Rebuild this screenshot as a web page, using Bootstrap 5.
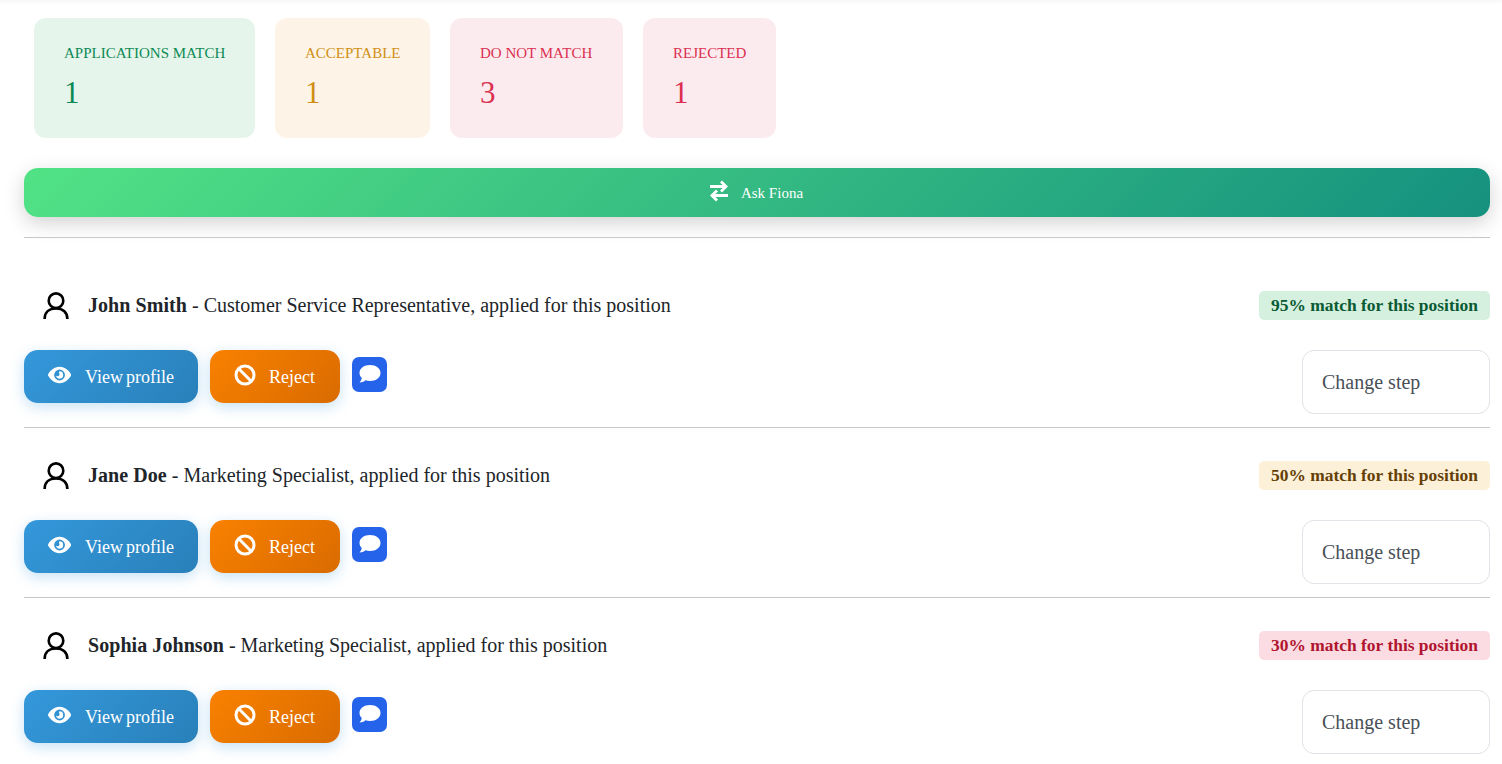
<!DOCTYPE html>
<html lang="en">
<head>
<meta charset="utf-8">
<title>Applications</title>
<link href="https://cdn.jsdelivr.net/npm/bootstrap@5.3.0/dist/css/bootstrap.min.css" rel="stylesheet">
<style>
html,body{height:764px;overflow:hidden}
body{font-family:"Liberation Serif",serif;background:#fff;color:#212529}
.topshade{height:5px;background:linear-gradient(#f8f8f8,#fff)}
.page{padding:0 12px 0 24px}
.stats{padding:13px 0 0 10px;gap:20px}
.stat{height:120px;padding:27px 0 0 30px;border-radius:12px}
.w-a{width:221px}.w-b{width:155px}.w-c{width:173px}.w-d{width:133px}
.stat-label{font-size:15px;line-height:17px;text-transform:uppercase;white-space:nowrap}
.stat-num{font-size:31px;line-height:36px;margin-top:13px}
.st-g{background:#e6f5eb;color:#0b8a55}
.st-y{background:#fdf4e7;color:#d08f14}
.st-r{background:#fbebef;color:#dc3050}
.askbar{margin-top:30px;height:49px;border-radius:14px;padding-right:2px;background:linear-gradient(135deg,#52e285,#15917f);box-shadow:0 6px 20px rgba(0,0,0,.18);color:#fff;font-size:15px;gap:12px}
.askbar svg{margin-bottom:3px}
.askbar span{margin-top:2px}
.rule{height:1px;background:#c8c8c8;margin:0}
.rule-a{margin-top:20px}
.appl{height:169px;padding-top:33px}
.appl-first{padding-top:53px;height:189px}
.who{font-size:20px;line-height:29px;height:29px}
.who b{letter-spacing:.06px}
.who svg{margin:0 18px 0 18px}
.pill{font-size:17.450px;font-weight:700;line-height:29px;height:29px;padding:0 12px;border-radius:5px}
.p-g{background:#d5f0df;color:#0a5a33}
.p-y{background:#fcf0d8;color:#654006}
.p-r{background:#fadce2;color:#b1142f}
.acts{margin-top:30px}
.btns{gap:12px}
.act{height:53px;border-radius:14px;color:#fff;font-size:18px;gap:13px;padding:0 24px;white-space:nowrap;box-shadow:0 4px 14px rgba(52,152,219,.28)}
.act svg{margin-bottom:3px}
.act span{margin-top:1px}
.act-b{background:linear-gradient(135deg,#3498db,#2980b9);width:174px}
.act-b span{margin-left:1px;word-spacing:-1.500px}
.act-o{background:linear-gradient(135deg,#f98100,#d96b00);width:130px}
.chat{width:35px;height:35px;margin-top:7px;border-radius:7px;background:#2563eb}
.stepper{width:188px;height:64px;border:1px solid #e2e2e8;border-radius:12px;padding-left:19px;font-size:20px;color:#495057;line-height:62px}
.defs{width:0;height:0;position:absolute}
</style>
</head>
<body>
<svg class="defs" aria-hidden="true">
  <symbol id="i-user" viewBox="0 0 28 28"><circle cx="14" cy="8.700" r="7.300" fill="none" stroke="#000" stroke-width="2.600"/><path fill="none" stroke="#000" stroke-width="2.600" d="M2.600 27c0-6.500 4.400-10.500 11.400-10.500S25.400 20.500 25.400 27"/></symbol>
  <symbol id="i-eye" viewBox="0 0 24 18"><path fill="#fff" fill-rule="evenodd" d="M12 .5C6.300.5 2.200 4.600.2 8.200a1.600 1.600 0 0 0 0 1.600C2.200 13.400 6.300 17.500 12 17.500s9.800-4.100 11.800-7.700a1.600 1.600 0 0 0 0-1.600C21.800 4.600 17.700.5 12 .5Zm0 2.900a5.600 5.600 0 1 1 0 11.200 5.600 5.600 0 0 1 0-11.200Z"/><path fill="#fff" d="M12 5.200a3.800 3.800 0 1 1-3.700 4.700c.9.700 2.200.7 3-.1.800-.8.900-2 .2-3-.2-.6 0-1.300.5-1.600Z"/></symbol>
  <symbol id="i-ban" viewBox="0 0 22 22"><circle cx="11" cy="11" r="9" fill="none" stroke="#fff" stroke-width="3"/><path fill="none" stroke="#fff" stroke-width="3" d="M4.800 4.800l12.400 12.400"/></symbol>
  <symbol id="i-chat" viewBox="0 0 22 19"><path fill="#fff" d="M11 0C5 0 .5 3.500.5 8c0 2 .9 3.700 2.300 5-.2 1.800-1.300 3.300-2.300 4.500 2.300 0 4.500-1 6-2.300 1.400.5 2.900.8 4.500.8 6 0 10.500-3.500 10.500-8S17 0 11 0Z"/></symbol>
</svg>
<div class="topshade"></div>
<div class="page">
  <div class="d-flex stats">
    <div class="stat st-g w-a"><div class="stat-label">Applications match</div><div class="stat-num">1</div></div>
    <div class="stat st-y w-b"><div class="stat-label">Acceptable</div><div class="stat-num">1</div></div>
    <div class="stat st-r w-c"><div class="stat-label">Do not match</div><div class="stat-num">3</div></div>
    <div class="stat st-r w-d"><div class="stat-label">Rejected</div><div class="stat-num">1</div></div>
  </div>
  <div class="askbar d-flex align-items-center justify-content-center">
    <svg width="20" height="22" viewBox="0 0 20 22" fill="none" stroke="#fff" stroke-width="2.800"><path d="M1 6.500h16M12 1.500l5 5-5 5"/><path d="M19 15.500H3M8 10.500l-5 5 5 5"/></svg>
    <span>Ask Fiona</span>
  </div>
  <div class="rule rule-a"></div>

  <div class="appl appl-first">
    <div class="d-flex justify-content-between align-items-center">
      <div class="who d-flex align-items-center"><svg width="28" height="28"><use href="#i-user"/></svg><span><b>John Smith</b> - Customer Service Representative, applied for this position</span></div>
      <div class="pill p-g">95% match for this position</div>
    </div>
    <div class="acts d-flex justify-content-between">
      <div class="d-flex btns align-items-start">
        <div class="act act-b d-flex align-items-center"><svg width="24" height="18"><use href="#i-eye"/></svg><span>View profile</span></div>
        <div class="act act-o d-flex align-items-center"><svg width="22" height="22"><use href="#i-ban"/></svg><span>Reject</span></div>
        <div class="chat d-flex align-items-center justify-content-center"><svg width="22" height="19"><use href="#i-chat"/></svg></div>
      </div>
      <div class="stepper">Change step</div>
    </div>
  </div>
  <div class="rule"></div>

  <div class="appl">
    <div class="d-flex justify-content-between align-items-center">
      <div class="who d-flex align-items-center"><svg width="28" height="28"><use href="#i-user"/></svg><span><b>Jane Doe</b> - Marketing Specialist, applied for this position</span></div>
      <div class="pill p-y">50% match for this position</div>
    </div>
    <div class="acts d-flex justify-content-between">
      <div class="d-flex btns align-items-start">
        <div class="act act-b d-flex align-items-center"><svg width="24" height="18"><use href="#i-eye"/></svg><span>View profile</span></div>
        <div class="act act-o d-flex align-items-center"><svg width="22" height="22"><use href="#i-ban"/></svg><span>Reject</span></div>
        <div class="chat d-flex align-items-center justify-content-center"><svg width="22" height="19"><use href="#i-chat"/></svg></div>
      </div>
      <div class="stepper">Change step</div>
    </div>
  </div>
  <div class="rule"></div>

  <div class="appl">
    <div class="d-flex justify-content-between align-items-center">
      <div class="who d-flex align-items-center"><svg width="28" height="28"><use href="#i-user"/></svg><span><b>Sophia Johnson</b> - Marketing Specialist, applied for this position</span></div>
      <div class="pill p-r">30% match for this position</div>
    </div>
    <div class="acts d-flex justify-content-between">
      <div class="d-flex btns align-items-start">
        <div class="act act-b d-flex align-items-center"><svg width="24" height="18"><use href="#i-eye"/></svg><span>View profile</span></div>
        <div class="act act-o d-flex align-items-center"><svg width="22" height="22"><use href="#i-ban"/></svg><span>Reject</span></div>
        <div class="chat d-flex align-items-center justify-content-center"><svg width="22" height="19"><use href="#i-chat"/></svg></div>
      </div>
      <div class="stepper">Change step</div>
    </div>
  </div>
</div>
</body>
</html>
